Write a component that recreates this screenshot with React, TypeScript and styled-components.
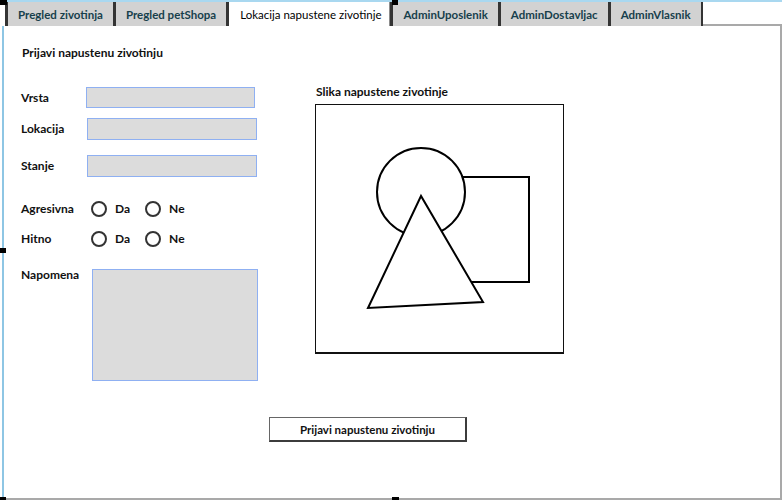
import styled, { createGlobalStyle } from "styled-components";

const GlobalStyle = createGlobalStyle`
  html, body {
    margin: 0;
    padding: 0;
    background: #fff;
  }

  body {
    font-family: Lato, "Liberation Sans", sans-serif;
    color: #111;
  }
`;

const tabs = [
  "Pregled zivotinja",
  "Pregled petShopa",
  "Lokacija napustene zivotinje",
  "AdminUposlenik",
  "AdminDostavljac",
  "AdminVlasnik",
];
const activeTab = 2;

const App = () => {
  return (
    <>
      <GlobalStyle />
      <Window>
        <TabBar>
          {tabs.map((title, i) => (
            <Tab key={title} $active={i === activeTab} $last={i === tabs.length - 1}>
              {title}
            </Tab>
          ))}
          <TabFiller />
        </TabBar>

        <Panel>
          <Title>Prijavi napustenu zivotinju</Title>
          <Columns>
            <FormColumn>
              <Row>
                <Label>Vrsta</Label>
                <TextInput $w={169} $h={21} />
              </Row>
              <Row $mt={10}>
                <Label>Lokacija</Label>
                <TextInput $w={170} $h={22} $indent={1} />
              </Row>
              <Row $mt={15}>
                <Label>Stanje</Label>
                <TextInput $w={170} $h={22} $indent={1} />
              </Row>
              <Row $mt={24}>
                <Label>Agresivna</Label>
                <RadioGroup>
                  <Option>
                    <Radio type="radio" name="agresivna" />
                    Da
                  </Option>
                  <Option>
                    <Radio type="radio" name="agresivna" />
                    Ne
                  </Option>
                </RadioGroup>
              </Row>
              <Row $mt={14}>
                <Label>Hitno</Label>
                <RadioGroup>
                  <Option>
                    <Radio type="radio" name="hitno" />
                    Da
                  </Option>
                  <Option>
                    <Radio type="radio" name="hitno" />
                    Ne
                  </Option>
                </RadioGroup>
              </Row>
              <Row $mt={22} $align="flex-start">
                <Label $top={-2}>Napomena</Label>
                <Note />
              </Row>
            </FormColumn>

            <ImageColumn>
              <Caption>Slika napustene zivotinje</Caption>
              <Picture>
                <svg width="247" height="247" viewBox="0 0 247 247">
                  <g stroke="#000" strokeWidth="2" fill="#fff">
                    <rect x="124" y="72" width="89" height="105" />
                    <circle cx="105" cy="87" r="44" />
                    <polygon points="105,91 52,203 167,197" strokeLinejoin="miter" />
                  </g>
                </svg>
              </Picture>
            </ImageColumn>
          </Columns>

          <SubmitButton type="button">Prijavi napustenu zivotinju</SubmitButton>
        </Panel>

        <Handle $x={0} $y={-2} $w={7} $h={5} />
        <Handle $x={392} $y={-2} $w={6} $h={5} />
        <Handle $x={0} $y={246} $w={6} $h={5} />
        <Handle $x={0} $y={495} $w={6} $h={3} />
        <Handle $x={392} $y={495} $w={7} $h={3} />
      </Window>
    </>
  );
};

const Window = styled.div`
  position: relative;
  display: flex;
  flex-direction: column;
  box-sizing: border-box;
  width: 782px;
  height: 500px;
  border-top: 2px solid #a9d8f0;
`;

const TabBar = styled.div`
  display: flex;
  height: 24px;
  padding-left: 5px;
`;

const Tab = styled.div<{ $active?: boolean; $last?: boolean }>`
  display: flex;
  align-items: center;
  padding: ${(p) => (p.$active ? "0 8px 0 11px" : "0 10px")};
  border-left: 3px solid #343434;
  border-right: ${(p) =>
    p.$active ? "1px solid #8c8c8c" : p.$last ? "2px solid #343434" : "none"};
  background: ${(p) => (p.$active ? "#fff" : "#d2d2d2")};
  color: ${(p) => (p.$active ? "#000" : "#17404c")};
  font-size: 11.5px;
  font-weight: ${(p) => (p.$active ? 400 : 700)};
  white-space: nowrap;
`;

const TabFiller = styled.div`
  flex: 1;
  border-bottom: 2px solid #a9a9a9;
`;

const Panel = styled.div`
  flex: 1;
  margin-left: 2px;
  padding: 19px 0 0 17px;
  border-left: 2px solid #8ec6e4;
  border-right: 2px solid #a9a9a9;
  border-bottom: 2px solid #a9a9a9;
`;

const Title = styled.div`
  margin-left: 1px;
  font-size: 12px;
  font-weight: 700;
  line-height: 16px;
`;

const Columns = styled.div`
  display: flex;
  margin-top: 23px;
`;

const FormColumn = styled.div`
  width: 294px;
  padding-top: 3px;
`;

const Row = styled.div<{ $mt?: number; $align?: string }>`
  display: flex;
  align-items: ${(p) => p.$align ?? "center"};
  margin-top: ${(p) => p.$mt ?? 0}px;
`;

const Label = styled.span<{ $top?: number }>`
  width: 65px;
  flex: none;
  margin-top: ${(p) => p.$top ?? 0}px;
  font-size: 12px;
  font-weight: 700;
  line-height: 16px;
`;

const TextInput = styled.input<{ $w: number; $h: number; $indent?: number }>`
  box-sizing: border-box;
  width: ${(p) => p.$w}px;
  height: ${(p) => p.$h}px;
  margin: 0 0 0 ${(p) => p.$indent ?? 0}px;
  padding: 0 4px;
  border: 1px solid #8fb0f2;
  background: #dcdcdc;
  outline: none;
`;

const RadioGroup = styled.div`
  display: flex;
  align-items: center;
  margin-left: 5px;
`;

const Option = styled.label`
  display: flex;
  align-items: center;
  gap: 8px;
  margin-right: 15px;
  font-size: 12px;
  font-weight: 700;
  line-height: 16px;
`;

const Radio = styled.input`
  appearance: none;
  box-sizing: border-box;
  width: 16px;
  height: 16px;
  margin: 0;
  border: 2.5px solid #333;
  border-radius: 50%;
  background: #fff;
`;

const Note = styled.textarea`
  box-sizing: border-box;
  width: 166px;
  height: 112px;
  margin: 0 0 0 6px;
  border: 1px solid #8fb0f2;
  background: #dcdcdc;
  resize: none;
  outline: none;
`;

const ImageColumn = styled.div`
  display: flex;
  flex-direction: column;
`;

const Caption = styled.div`
  margin-left: 1px;
  font-size: 12px;
  font-weight: 700;
  line-height: 16px;
`;

const Picture = styled.div`
  box-sizing: border-box;
  width: 249px;
  height: 250px;
  margin-top: 4px;
  border: 1px solid #111;
  border-bottom-width: 2px;

  svg {
    display: block;
  }
`;

const SubmitButton = styled.button`
  display: block;
  box-sizing: border-box;
  width: 198px;
  height: 25px;
  margin: 36px 0 0 248px;
  padding: 0;
  border: 1px solid #666;
  border-right: 2px solid #3c3c3c;
  border-bottom: 2px solid #3c3c3c;
  background: #fff;
  color: #111;
  font-family: Lato, "Liberation Sans", sans-serif;
  font-size: 11.5px;
  font-weight: 700;
`;

const Handle = styled.div<{ $x: number; $y: number; $w: number; $h: number }>`
  position: absolute;
  left: ${(p) => p.$x}px;
  top: ${(p) => p.$y}px;
  width: ${(p) => p.$w}px;
  height: ${(p) => p.$h}px;
  background: #000;
`;

export default App;
